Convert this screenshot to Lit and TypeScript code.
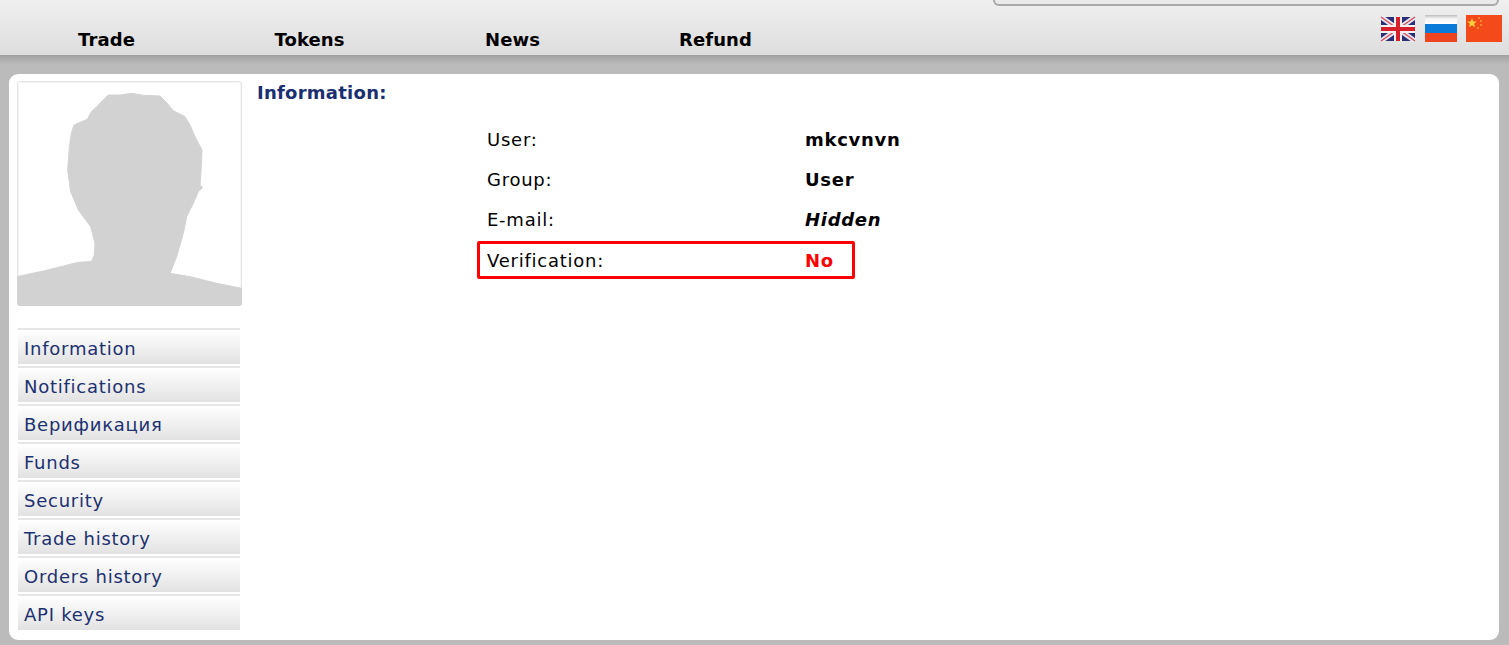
import { LitElement, html, css, svg } from "lit";
import { customElement } from "lit/decorators.js";

const NAV = ["Trade", "Tokens", "News", "Refund"];
const MENU = ["Information", "Notifications", "Верификация", "Funds", "Security", "Trade history", "Orders history", "API keys"];
const ROWS: [string, string, string][] = [
  ["User:", "mkcvnvn", ""],
  ["Group:", "User", ""],
  ["E-mail:", "Hidden", "em"],
];
const HEAD = "51,620 130,603 230,578 275,574 283,555 285,520 272,470 250,440 235,420 212,365 203,300 206,260 208,230 214,190 222,165 245,155 262,148 272,128 290,110 312,88 325,75 360,75 395,70 430,76 480,78 500,98 520,122 555,140 570,165 585,200 606,240 604,290 600,345 608,353 595,365 580,400 560,440 550,490 530,560 510,610 570,620 650,640 725,655 725,708 51,708";

@customElement("app-root")
export class AppRoot extends LitElement {
  static styles = css`
    :host { display: block; height: 645px; overflow: hidden; background: #bbb; font-family: "DejaVu Sans", Verdana, sans-serif; font-size: 18px; color: #000; letter-spacing: .75px; }
    .header { height: 56px; box-sizing: border-box; border-bottom: 1px solid #a0a0a0; background: linear-gradient(#f0f0f0, #dddddd); display: flex; flex-direction: column; }
    .search { align-self: flex-end; width: 506px; height: 6px; box-sizing: border-box; margin-right: 10px; border: 2px solid #aaa; border-top: 0; border-radius: 0 0 7px 7px; background: #eaeaea; }
    .bar { display: flex; justify-content: space-between; padding: 9px 7px 0 5px; flex: 1; }
    .nav { display: flex; align-items: flex-end; padding-bottom: 4px; }
    .nav a { width: 203px; text-align: center; font-weight: 700; font-size: 18px; line-height: 22px; letter-spacing: .1px; }
    .flags { display: flex; gap: 9px; align-items: flex-start; }
    .flags svg { display: block; filter: blur(.45px); }
    .shade { height: 18px; background: linear-gradient(#a4a4a4, #bbb 8px); }
    .card { margin: 0 10px 0 9px; height: 566px; box-sizing: border-box; background: #fff; border-radius: 9px; padding: 7px 8px; display: flex; gap: 15px; }
    .side { width: 225px; flex: none; }
    .avatar { display: block; width: 225px; height: 225px; border-radius: 3px; }
    .avatar polygon { filter: blur(2px); }
    .menu { margin: 22px 0 0 1px; width: 222px; display: flex; flex-direction: column; gap: 2px; }
    .menu a { height: 36px; box-sizing: border-box; border-top: 2px solid #e6e6e6; background: linear-gradient(#fff, #e2e2e2); color: #1c3170; padding: 1px 0 0 6px; font-size: 18px; line-height: 36px; white-space: nowrap; }
    .main { flex: 1; }
    h2 { margin: 0; font-size: 18px; line-height: 24px; font-weight: 700; color: #1a2f6f; letter-spacing: .25px; }
    .rows { margin: 15px 0 0 220px; width: 378px; display: flex; flex-direction: column; }
    .row { height: 40px; box-sizing: border-box; padding: 0 0 2px 10px; display: grid; grid-template-columns: 319px 1fr; align-items: center; }
    .row b { font-weight: 700; letter-spacing: .7px; margin-left: -1px; }
    .row b.em { font-style: italic; }
    .row.flag { height: 38px; margin-top: 1px; border: 3px solid #f00; border-radius: 2px; padding: 0 0 0 7px; }
    .row.flag b { color: #f00; }
  `;

  private uk() {
    return svg`<svg width="36" height="27" viewBox="-1 -1 36 27" aria-hidden="true">
      <rect x="0" y="1" width="34" height="24" fill="#2a2f78"/>
      <path d="M0 1L34 25M34 1L0 25" stroke="#e8e8f0" stroke-width="5"/>
      <path d="M0 1L34 25M34 1L0 25" stroke="#d8505a" stroke-width="1.500"/>
      <path d="M17 1V25M0 13H34" stroke="#f4f0f0" stroke-width="8"/>
      <path d="M17 1V25M0 13H34" stroke="#d8202c" stroke-width="4"/>
    </svg>`;
  }
  private ru() {
    return svg`<svg width="32" height="27" viewBox="0 0 32 27" aria-hidden="true">
      <defs><linearGradient id="w" x1="0" y1="0" x2="0" y2="1"><stop offset="0" stop-color="#bdbdbd"/><stop offset=".4" stop-color="#f4f4f4"/><stop offset="1" stop-color="#fff"/></linearGradient></defs>
      <rect width="32" height="9" fill="url(#w)"/>
      <rect y="9" width="32" height="9" fill="#0a7ad8"/>
      <rect y="18" width="32" height="9" fill="#ee4420"/>
    </svg>`;
  }
  private cn() {
    return svg`<svg width="36" height="27" viewBox="0 0 36 27" aria-hidden="true">
      <rect width="36" height="27" fill="#f4491a"/>
      <path d="M6 3l1.300 3.400 3.600.1-2.800 2.200 1 3.500-3.100-2-3.100 2 1-3.500L1.100 6.500l3.600-.1z" fill="#fbd23a"/>
      <g fill="#fba030"><circle cx="13" cy="3" r="1"/><circle cx="15" cy="6" r="1"/><circle cx="15" cy="10" r="1"/><circle cx="12" cy="13" r="1"/></g>
    </svg>`;
  }

  render() {
    return html`
      <div class="header">
        <div class="search"></div>
        <div class="bar">
          <nav class="nav">${NAV.map((n) => html`<a>${n}</a>`)}</nav>
          <div class="flags">${this.uk()}${this.ru()}${this.cn()}</div>
        </div>
      </div>
      <div class="shade"></div>
      <div class="card">
        <div class="side">
          <svg class="avatar" viewBox="51 33 675 675" aria-hidden="true">
            <rect x="52" y="34" width="673" height="673" fill="#fff" stroke="#e4e4e4" stroke-width="6"/>
            <polygon points=${HEAD} fill="#d2d2d2" stroke="#d2d2d2" stroke-width="3" stroke-linejoin="round"/>
          </svg>
          <div class="menu">${MENU.map((m) => html`<a>${m}</a>`)}</div>
        </div>
        <div class="main">
          <h2>Information:</h2>
          <div class="rows">
            ${ROWS.map(([l, v, c]) => html`<div class="row"><span>${l}</span><b class=${c}>${v}</b></div>`)}
            <div class="row flag"><span>Verification:</span><b>No</b></div>
          </div>
        </div>
      </div>
    `;
  }
}
